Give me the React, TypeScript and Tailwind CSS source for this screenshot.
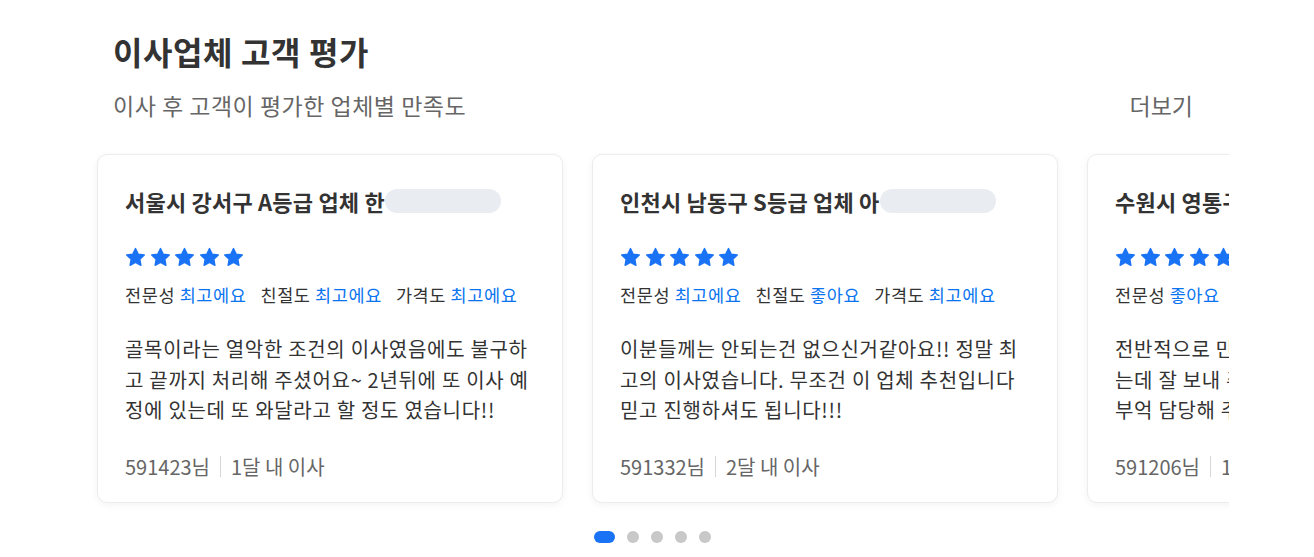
import React from 'react';

type Review = {
  title: string;
  scores: { label: string; value: string }[];
  lines: string[];
  user: string;
  period: string;
};

const reviews: Review[] = [
  {
    title: '서울시 강서구 A등급 업체 한',
    scores: [
      { label: '전문성', value: '최고에요' },
      { label: '친절도', value: '최고에요' },
      { label: '가격도', value: '최고에요' },
    ],
    lines: [
      '골목이라는 열악한 조건의 이사였음에도 불구하',
      '고 끝까지 처리해 주셨어요~ 2년뒤에 또 이사 예',
      '정에 있는데 또 와달라고 할 정도 였습니다!!',
    ],
    user: '591423님',
    period: '1달 내 이사',
  },
  {
    title: '인천시 남동구 S등급 업체 아',
    scores: [
      { label: '전문성', value: '최고에요' },
      { label: '친절도', value: '좋아요' },
      { label: '가격도', value: '최고에요' },
    ],
    lines: [
      '이분들께는 안되는건 없으신거같아요!! 정말 최',
      '고의 이사였습니다. 무조건 이 업체 추천입니다',
      '믿고 진행하셔도 됩니다!!!',
    ],
    user: '591332님',
    period: '2달 내 이사',
  },
  {
    title: '수원시 영통구 A등급 업체 김',
    scores: [
      { label: '전문성', value: '좋아요' },
      { label: '친절도', value: '최고에요' },
      { label: '가격도', value: '좋아요' },
    ],
    lines: [
      '전반적으로 만족스러운 이사였어요 짐이 많았',
      '는데 잘 보내 주셨고 정리까지 꼼꼼하게 해주',
      '부억 담당해 주신 분도 친절하셨어요!!',
    ],
    user: '591206님',
    period: '1달 내 이사',
  },
];

const Star = () => (
  <svg width="21" height="21" viewBox="0 0 24 24" className="shrink-0">
    <path
      d="M12 1.8l3.05 6.4 7 .9-5.15 4.85 1.3 6.95L12 17.5l-6.2 3.4 1.3-6.95L1.95 9.1l7-.9z"
      fill="#1a73f5"
      stroke="#1a73f5"
      strokeWidth="1.6"
      strokeLinejoin="round"
    />
  </svg>
);

const ReviewCard: React.FC<{ review: Review }> = ({ review }) => (
  <div className="w-[466px] h-[349px] shrink-0 bg-white rounded-[10px] border border-[#ececf0] shadow-[0_2px_8px_rgba(0,0,0,0.05)] pl-[27px] pr-[20px] pt-[32px] overflow-hidden">
    <div className="flex items-center h-[28px]">
      <span className="text-[22px] font-bold text-[#333] whitespace-nowrap tracking-[0.2px]">{review.title}</span>
      <span className="w-[116px] h-[24px] rounded-full bg-[#e9ecf1] shrink-0" />
    </div>
    <div className="flex gap-[3.6px] mt-[32px]">
      {[0, 1, 2, 3, 4].map((i) => (
        <Star key={i} />
      ))}
    </div>
    <div className="flex gap-[14px] mt-[15px] text-[17.5px] leading-[24px] whitespace-nowrap tracking-[0.6px]">
      {review.scores.map((s) => (
        <span key={s.label} className="text-[#333]">
          {s.label} <span className="text-[#0a74f0]">{s.value}</span>
        </span>
      ))}
    </div>
    <div className="mt-[27px] text-[20px] leading-[30.5px] text-[#333] tracking-[0.7px]">
      {review.lines.map((l, i) => (
        <p key={i} className="whitespace-nowrap">
          {l}
        </p>
      ))}
    </div>
    <div className="flex items-center mt-[27px] text-[20px] leading-[28px] text-[#666] whitespace-nowrap">
      <span>{review.user}</span>
      <span className="w-px h-[21px] bg-[#d6d6d6] mx-[10px]" />
      <span>{review.period}</span>
    </div>
  </div>
);

export default function App() {
  return (
    <div className="w-[1314px] h-[557px] bg-white overflow-hidden font-['Noto_Sans_CJK_KR','Noto_Sans',sans-serif]">
      <div className="pl-[113px] pr-[121px] pt-[30px]">
        <h2 className="text-[32px] leading-[42px] font-bold text-[#333] tracking-[0.6px]">이사업체 고객 평가</h2>
        <div className="flex items-center justify-between mt-[17px]">
          <p className="text-[23px] leading-[32px] text-[#666] tracking-[0.5px]">이사 후 고객이 평가한 업체별 만족도</p>
          <button className="text-[23px] leading-[32px] text-[#666]">더보기</button>
        </div>
      </div>
      <div className="ml-[85px] w-[1144px] overflow-hidden mt-[30px] pl-[12px] pt-[3px] pb-[8px]">
        <div className="flex gap-[29px]">
          {reviews.map((r) => (
            <ReviewCard key={r.user} review={r} />
          ))}
        </div>
      </div>
      <div className="flex justify-center items-center gap-[12px] mt-[20px] ml-[-10px]">
        <span className="w-[21px] h-[12px] rounded-full bg-[#1a73f5]" />
        <span className="w-[12px] h-[12px] rounded-full bg-[#c8c8c8]" />
        <span className="w-[12px] h-[12px] rounded-full bg-[#c8c8c8]" />
        <span className="w-[12px] h-[12px] rounded-full bg-[#c8c8c8]" />
        <span className="w-[12px] h-[12px] rounded-full bg-[#c8c8c8]" />
      </div>
    </div>
  );
}
